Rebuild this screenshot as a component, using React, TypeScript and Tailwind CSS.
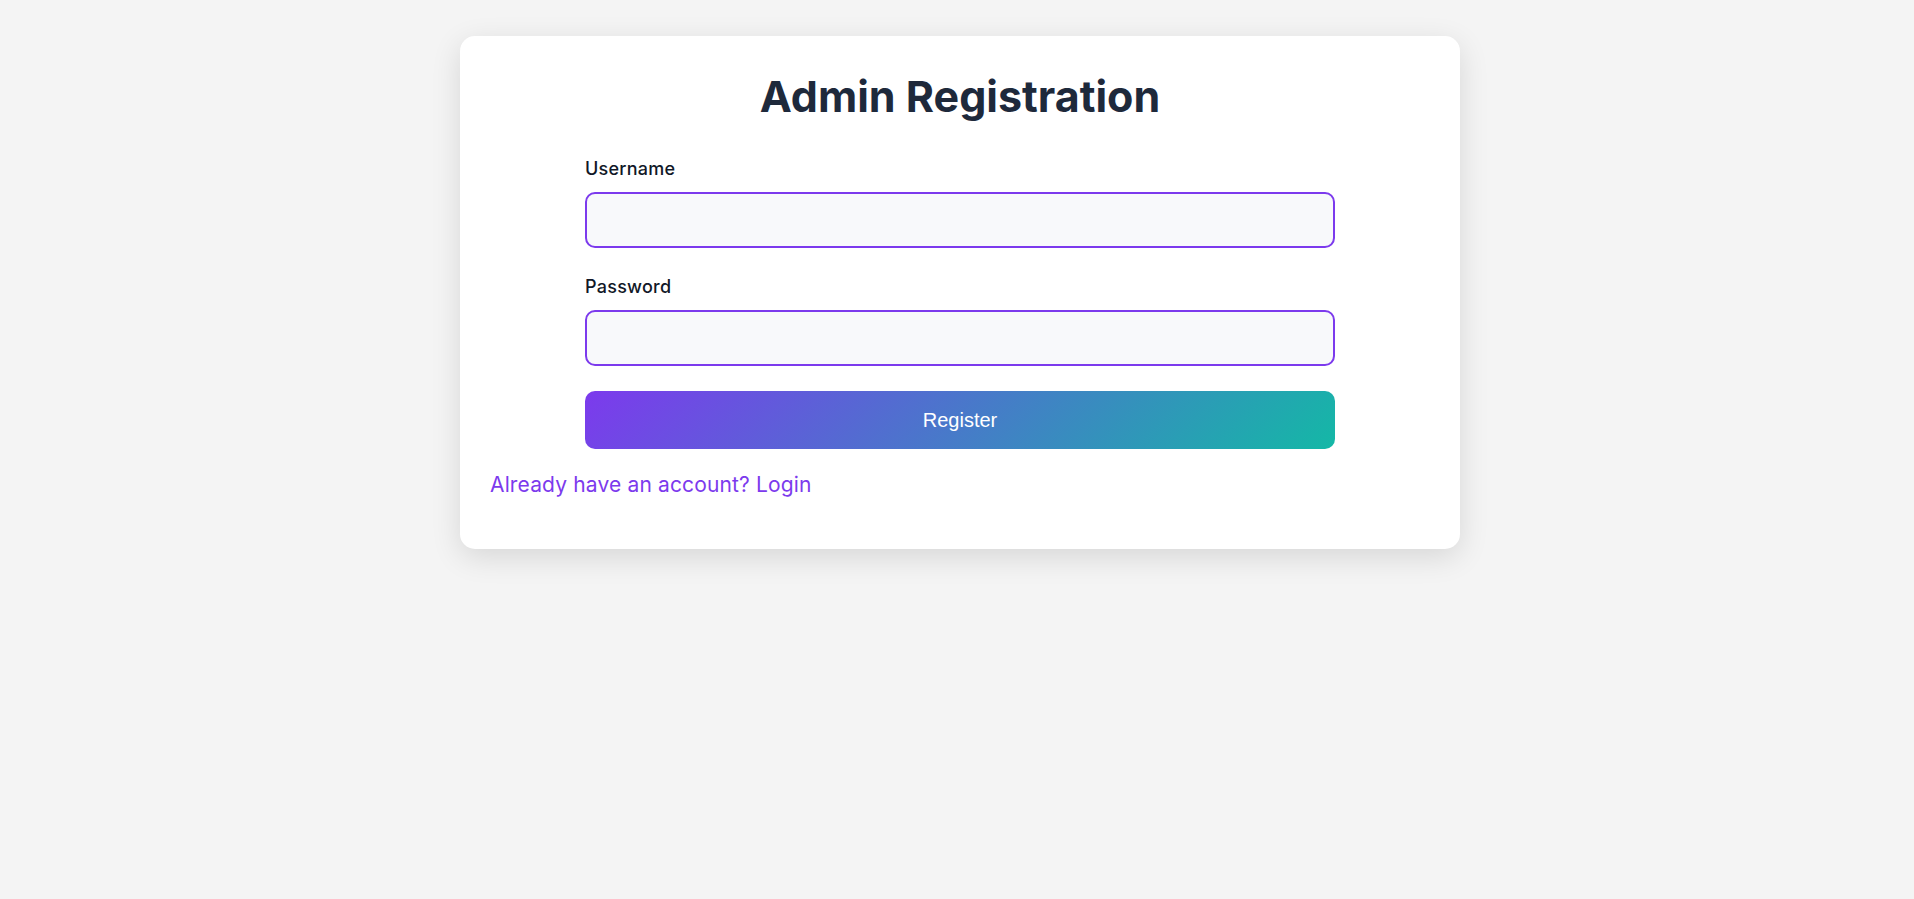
import React from "react";

export default function App() {
  return (
    <div className="min-h-screen w-full bg-[#f4f4f4] flex justify-center pl-[6px] pt-[36px]" style={{ fontFamily: "Inter, 'Noto Sans', sans-serif" }}>
      <div className="w-[1000px] h-fit bg-white rounded-[15px] shadow-[0_8px_30px_rgba(0,0,0,0.12)] pt-[34px] pb-[50px] px-[30px]">
        <h1 className="text-center text-[43px] leading-[52px] font-bold text-[#1e293b] tracking-[0px]">
          Admin Registration
        </h1>
        <form className="w-[750px] mx-auto mt-[35px]" onSubmit={(e) => e.preventDefault()}>
          <div className="mb-[27px]">
            <label className="block text-[18px] leading-[24px] font-medium text-[#111827] tracking-[0.25px] mb-[11px]">Username</label>
            <input type="text" className="block w-full h-[56px] rounded-[10px] border-2 border-[#7c3aed] bg-[#f8f9fb] px-3 outline-none" />
          </div>
          <div className="mb-[25px]">
            <label className="block text-[18px] leading-[24px] font-medium text-[#111827] tracking-[0.25px] mb-[11px]">Password</label>
            <input type="password" className="block w-full h-[56px] rounded-[10px] border-2 border-[#7c3aed] bg-[#f8f9fb] px-3 outline-none" />
          </div>
          <button
            type="submit"
            className="block w-full h-[58px] rounded-[10px] bg-[linear-gradient(135deg,#7c3aed,#14b8a6)] text-white text-[20px]"
            style={{ fontFamily: "'Liberation Sans', Arial, sans-serif" }}
          >
            Register
          </button>
        </form>
        <div className="mt-[22px]">
          <a href="#" className="text-[21px] leading-[28px] tracking-[0.15px] text-[#7c3aed]">Already have an account? Login</a>
        </div>
      </div>
    </div>
  );
}
